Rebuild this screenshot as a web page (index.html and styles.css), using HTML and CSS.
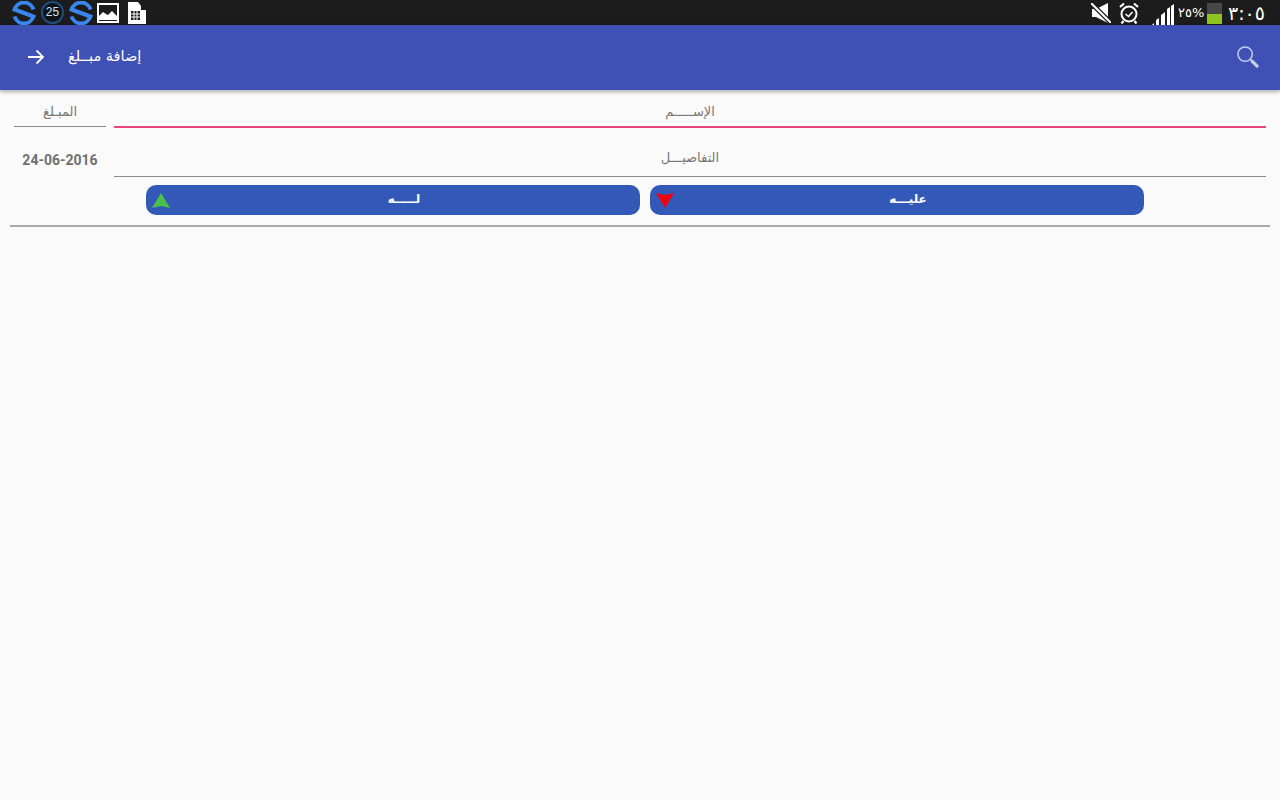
FILE: index.html
```html
<!DOCTYPE html>
<html lang="ar">
<head>
  <meta charset="UTF-8">
  <meta name="viewport" content="width=device-width, initial-scale=1.0">
  <title>إضافة مبلغ</title>
  <link rel="stylesheet" href="styles.css">
</head>
<body>

  <div class="status-bar">
    <div class="status-left">
      <svg class="icon-s" viewBox="0 0 24 24"><path d="M21.500 8.500A10 10 0 0 0 2.500 8.500L21.500 15.500A10 10 0 0 1 2.500 15.500" fill="none" stroke="#3a86ee" stroke-width="4"/></svg>
      <span class="badge-25">25</span>
      <svg class="icon-s" viewBox="0 0 24 24"><path d="M21.500 8.500A10 10 0 0 0 2.500 8.500L21.500 15.500A10 10 0 0 1 2.500 15.500" fill="none" stroke="#3a86ee" stroke-width="4"/></svg>
      <svg class="icon-pic" viewBox="0 0 22 20"><rect x="1" y="1" width="20" height="18" fill="#1c1c1c" stroke="#fff" stroke-width="2"/><path d="M2 17v-4l4-4 3 2 2 1 4-4 5 5v4z" fill="#fff"/></svg>
      <svg class="icon-sim" viewBox="0 0 19 22"><path d="M1 0h10l3 4v4h5v14H1z" fill="#fff"/><path d="M4 9h9v9H4z" fill="#1c1c1c"/><path d="M7 9v9M10 9v9M4 12h9M4 15h9M15 11h4M15 16h4" stroke="#fff" stroke-width="1"/></svg>
    </div>
    <div class="status-right">
      <svg class="icon-mute" viewBox="0 0 20 20"><path d="M1 6h4l12-6v20L5 14H1z" fill="#fff"/><path d="M0 0l20 20" stroke="#1c1c1c" stroke-width="4.500"/><path d="M0 0l20 20" stroke="#fff" stroke-width="2"/></svg>
      <svg class="icon-alarm" viewBox="0 0 20 22"><circle cx="10" cy="12" r="7.500" fill="none" stroke="#fff" stroke-width="2"/><path d="M6.500 12l3 2.500 4-4.500" fill="none" stroke="#fff" stroke-width="1.600"/><path d="M1 5l4-3.500M19 5l-4-3.500M4.500 19l-2 2.500M15.500 19l2 2.500" stroke="#fff" stroke-width="2.200"/></svg>
      <svg class="icon-signal" viewBox="0 0 22 21"><path d="M0 21l2-2v2zM4 21v-5l3-2v7zM9 21V11l4-3v13zM15 21V5l3-2v18zM19 21V2l3-2v21z" fill="#fff"/></svg>
      <span class="battery-pct">٢٥%</span>
      <span class="battery"><span class="battery-level"></span></span>
      <span class="clock">٣:٠٥</span>
    </div>
  </div>

  <div class="app-bar">
    <div class="app-bar-start">
      <svg class="icon-back" viewBox="0 0 18 16"><path d="M1 8h15M9.500 1.500L16 8l-6.500 6.500" fill="none" stroke="#fff" stroke-width="1.800"/></svg>
      <span class="app-title">إضافة مبــلغ</span>
    </div>
    <svg class="icon-search" viewBox="0 0 24 24"><circle cx="9.500" cy="9.500" r="7.500" fill="none" stroke="#c5cfe8" stroke-width="1.600"/><path d="M15 15l2 2" stroke="#c5cfe8" stroke-width="1.600"/><path d="M17 17l5 5" stroke="#c5cfe8" stroke-width="3.400" stroke-linecap="round"/></svg>
  </div>

  <form class="entry-form">
    <div class="form-row row-top">
      <div class="field field-side underline-gray"><span class="field-label">المبـلغ</span></div>
      <div class="field field-main underline-pink"><span class="field-label">الإســـــم</span></div>
    </div>
    <div class="form-row row-details">
      <div class="date-value">24-06-2016</div>
      <div class="field field-main underline-gray details-field"><span class="field-label">التفاصيـــل</span></div>
    </div>
    <div class="button-container">
      <button type="button" class="type-button">
        <svg class="arrow arrow-up" viewBox="0 0 20 16"><path d="M10 0l9 15-9-2-9 2z" fill="#4cbf4c"/></svg>
        <span>لـــــه</span>
      </button>
      <button type="button" class="type-button">
        <svg class="arrow arrow-down" viewBox="0 0 20 16"><path d="M10 16L1 1l9 2 9-2z" fill="#f00010"/></svg>
        <span>عليـــه</span>
      </button>
    </div>
    <hr class="divider">
  </form>

</body>
</html>
```

FILE: styles.css
```css
* {
  box-sizing: border-box;
}
body {
  margin: 0;
  height: 800px;
  overflow: hidden;
  font-family: "DejaVu Sans", sans-serif;
  background-color: #fafafa;
}
.status-bar {
  height: 25px;
  display: flex;
  justify-content: space-between;
  align-items: center;
  padding: 0 17px 0 12px;
  background-color: #1c1c1c;
  color: #fff;
}
.status-left, .status-right {
  display: flex;
  align-items: center;
}
.icon-s {
  width: 24px;
  height: 24px;
}
.badge-25 {
  width: 23px;
  height: 23px;
  margin: 0 5px;
  border: 2px solid #1f4f80;
  border-radius: 50%;
  font-family: "Liberation Sans", sans-serif;
  font-size: 12px;
  line-height: 19px;
  text-align: center;
  color: #cfe0f0;
  background-color: #101418;
}
.icon-pic {
  width: 22px;
  height: 20px;
  margin-left: 4px;
}
.icon-sim {
  width: 19px;
  height: 22px;
  margin-left: 8px;
}
.icon-mute {
  width: 20px;
  height: 20px;
}
.icon-alarm {
  width: 20px;
  height: 22px;
  margin-left: 8px;
}
.icon-signal {
  width: 22px;
  height: 21px;
  margin: 3px 0 0 13px;
}
.battery-pct {
  width: 26px;
  margin-left: 4px;
  font-size: 13px;
}
.battery {
  width: 15px;
  height: 21px;
  margin: 2px 0 0 3px;
  display: flex;
  align-items: flex-end;
  background-color: #484848;
}
.battery-level {
  width: 100%;
  height: 10px;
  background-color: #8fc31f;
}
.clock {
  width: 35px;
  margin-left: 6px;
  font-size: 19px;
  text-align: right;
}
.app-bar {
  height: 65px;
  display: flex;
  justify-content: space-between;
  align-items: center;
  padding: 0 21px 2px 27px;
  background-color: #3f51b5;
  box-shadow: 0 2px 4px rgba(0, 0, 0, 0.3);
}
.app-bar-start {
  display: flex;
  align-items: center;
}
.icon-back {
  width: 18px;
  height: 16px;
}
.app-title {
  margin-left: 23px;
  padding-bottom: 2px;
  font-size: 14.500px;
  color: #fff;
}
.icon-search {
  width: 23px;
  height: 23px;
}
.entry-form {
  padding: 0 10px;
}
.form-row {
  display: flex;
  padding: 0 4px;
}
.row-top {
  height: 38px;
}
.field {
  text-align: center;
}
.field-label {
  font-size: 13px;
  color: #777;
}
.field-side {
  width: 92px;
  height: 37px;
  padding-top: 11px;
}
.field-main {
  flex: 1;
  margin-left: 8px;
  padding: 11px 0 0 0;
}
.underline-gray {
  border-bottom: 1px solid #8a8a8a;
}
.underline-pink {
  border-bottom: 2px solid #e8457c;
}
.row-details {
  height: 49px;
}
.details-field {
  padding-top: 19px;
}
.date-value {
  width: 92px;
  padding-top: 24px;
  font-family: Roboto, sans-serif;
  font-size: 14px;
  font-weight: bold;
  color: #707070;
  text-align: center;
}
.button-container {
  display: flex;
  gap: 10px;
  padding-left: 136px;
  margin-top: 8px;
}
.type-button {
  position: relative;
  width: 494px;
  height: 30px;
  padding: 0 0 2px 22px;
  border: none;
  border-radius: 10px;
  background-color: #3359b8;
  color: #fff;
  font-family: "DejaVu Sans", sans-serif;
  font-size: 12px;
  font-weight: bold;
}
.arrow {
  position: absolute;
  top: 8px;
  width: 20px;
  height: 16px;
}
.arrow-up {
  left: 5px;
}
.arrow-down {
  left: 5px;
  top: 7px;
}
.divider {
  height: 2px;
  margin: 10px 0 0 0;
  border: none;
  background-color: #a8a8a8;
}
```
